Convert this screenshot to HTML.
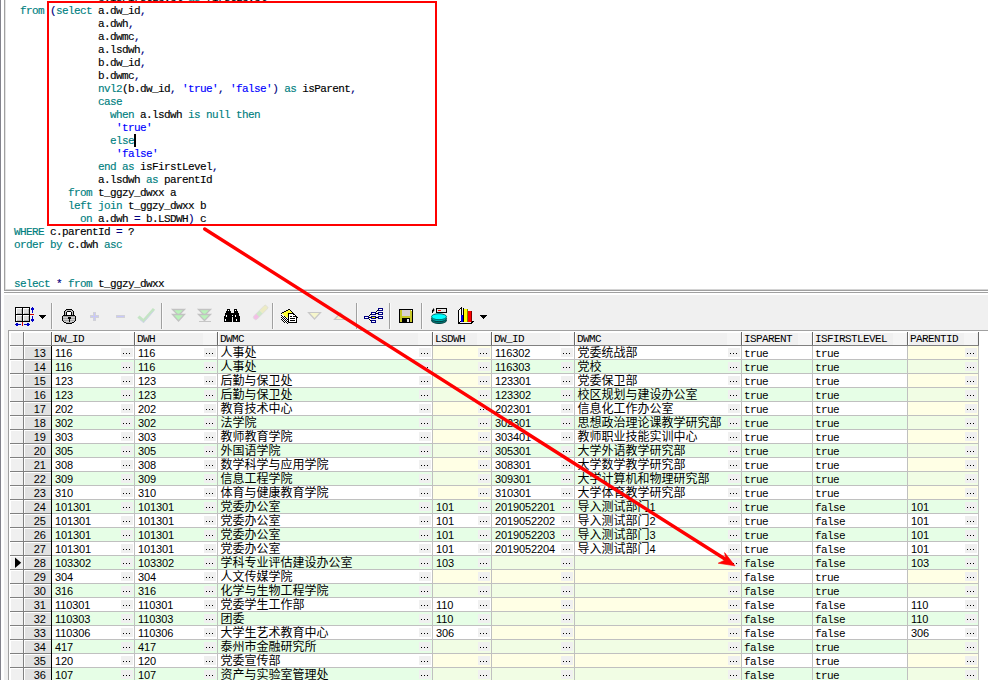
<!DOCTYPE html>
<html lang="zh-CN">
<head>
<meta charset="utf-8">
<title>SQL Window</title>
<style>
html,body{margin:0;padding:0;}
body{width:988px;height:680px;overflow:hidden;background:#fff;position:relative;font-family:"Liberation Mono","Noto Sans CJK SC",monospace;}
div,span,i,svg{position:absolute;box-sizing:border-box;}
span{position:static;}
/* window edges */
#edge{left:0;top:0;width:1px;height:680px;background:#82828c;}
#edl{left:4px;top:0;width:1px;height:290px;background:#a0a0a0;}
#edl2{left:5px;top:0;width:1px;height:289px;background:#e3e3e3;}
#edb1{left:5px;top:289px;width:983px;height:1px;background:#d4d4d4;}
#edb2{left:4px;top:290px;width:984px;height:1px;background:#a0a0a0;}
#spl{left:4px;top:292px;width:984px;height:1px;background:#a0a0a0;}
#tb{left:4px;top:295px;width:984px;height:385px;background:#f0f0f0;}
/* editor text */
.cl{-webkit-text-stroke:0.15px;white-space:pre;font-size:11px;line-height:13px;height:13px;letter-spacing:-0.6px;color:#000;}
.k{color:#008080;}
.s{color:#0000ff;}
.y{color:#000080;}
#caret{left:134px;top:134px;width:2px;height:13px;background:#000;}
#box{left:47px;top:1px;width:390px;height:225px;border:2px solid #ff0000;}
#arrow{left:0;top:0;}
/* grid */
#grid{left:8px;top:330px;width:980px;height:350px;background:#fff;border-left:1px solid #a0a0a0;border-top:1px solid #a0a0a0;}
#gridwrap{left:0;top:0;width:988px;height:680px;font-size:11px;letter-spacing:-0.6px;}
.hrow{left:0;top:332px;width:979px;height:14px;}
#hbg{left:10px;top:332px;width:969px;height:14px;background:#f0f0f0;border-bottom:1px solid #808080;}
.hc{top:0;height:13px;border-left:1px solid #fff;border-top:1px solid #fff;border-right:0;}
.hc::after{content:"";position:absolute;right:-1px;top:-1px;width:1px;height:13px;background:#696969;}
.ht{position:absolute;left:1px;top:0px;line-height:13px;white-space:pre;}
.hb{right:1px;top:0px;width:13px;height:12px;background:#f5f5f5;}
.row{left:0;width:979px;height:14px;}
.row>div{top:0;height:13px;line-height:13px;white-space:pre;}
.ic{left:10px;width:13px;background:#f0f0f0;border-left:1px solid #fff;border-top:1px solid #fff;}
.nc{left:24px;width:27px;background:#e1e1e1;border-left:1px solid #fff;border-top:1px solid #fff;text-align:right;padding-right:5.2px;}
.row>.nc{line-height:13px;}
.c{background:#fff;padding-left:2px;overflow:hidden;}
.row>.c{line-height:17px;}
.row>.c.d,.row>.c.zz{line-height:15px;}
.row>.c.d{padding-left:3px;}
.row>.c.zz{padding-left:2.5px;}
.alt .c{background:#e6fee6;}
.c.nul{background:#ffffe5;}
.alt .c.nul{background:#f1fde4;}
.z{font-family:"Liberation Sans","Noto Sans CJK SC",sans-serif;font-size:12px;letter-spacing:0;}
.d,.row>.nc,.row>.zz{font-family:"Liberation Sans",sans-serif;font-size:11px;letter-spacing:-0.12px;}
.b{right:1px;top:2px;width:12px;height:9px;background:#f0f0f0;}
.b::after{content:"";position:absolute;left:2px;top:5px;width:1px;height:1px;background:#000;box-shadow:3px 0 0 #000,6px 0 0 #000;}
.mk{left:4px;top:0px;}
.hl{left:10px;width:969px;height:1px;background:#c0c0c0;}
.hlf{left:10px;width:41px;height:1px;background:#808080;}
.vl{top:346px;width:1px;height:334px;background:#c0c0c0;}
#vnum{left:51px;top:346px;width:1px;height:334px;background:#000;}
#vind{left:23px;top:332px;width:1px;height:348px;background:#808080;}
</style>
</head>
<body>
<div id="edge"></div>
<div id="tb"></div>
<div id="edl"></div><div id="edl2"></div><div id="edb1"></div><div id="edb2"></div><div id="spl"></div>
<div id="editor">
<div class="cl" style="left:98px;top:-8px">c.isFirstLevel <span class="k">as</span> firstLevel</div>
<div class="cl" style="left:20px;top:5px"><span class="k">from</span> <span class="y">(</span><span class="k">select</span> a.dw_id<span class="y">,</span></div>
<div class="cl" style="left:98px;top:18px">a.dwh<span class="y">,</span></div>
<div class="cl" style="left:98px;top:31px">a.dwmc<span class="y">,</span></div>
<div class="cl" style="left:98px;top:44px">a.lsdwh<span class="y">,</span></div>
<div class="cl" style="left:98px;top:57px">b.dw_id<span class="y">,</span></div>
<div class="cl" style="left:98px;top:70px">b.dwmc<span class="y">,</span></div>
<div class="cl" style="left:98px;top:83px"><span class="k">nvl2</span>(b.dw_id<span class="y">,</span> <span class="s">'true'</span><span class="y">,</span> <span class="s">'false'</span><span class="y">)</span> <span class="k">as</span> isParent<span class="y">,</span></div>
<div class="cl" style="left:98px;top:96px"><span class="k">case</span></div>
<div class="cl" style="left:110px;top:109px"><span class="k">when</span> a.lsdwh <span class="k">is null then</span></div>
<div class="cl" style="left:116px;top:122px"><span class="s">'true'</span></div>
<div class="cl" style="left:110px;top:135px"><span class="k">else</span></div>
<div class="cl" style="left:116px;top:148px"><span class="s">'false'</span></div>
<div class="cl" style="left:98px;top:161px"><span class="k">end as</span> isFirstLevel<span class="y">,</span></div>
<div class="cl" style="left:98px;top:174px">a.lsdwh <span class="k">as</span> parentId</div>
<div class="cl" style="left:68px;top:187px"><span class="k">from</span> t_ggzy_dwxx a</div>
<div class="cl" style="left:68px;top:200px"><span class="k">left join</span> t_ggzy_dwxx b</div>
<div class="cl" style="left:80px;top:213px"><span class="k">on</span> a.dwh <span class="y">=</span> b.LSDWH<span class="y">)</span> c</div>
<div class="cl" style="left:14px;top:226px"><span class="k">WHERE</span> c.parentId <span class="y">=</span> ?</div>
<div class="cl" style="left:14px;top:239px"><span class="k">order by</span> c.dwh <span class="k">asc</span></div>
<div class="cl" style="left:14px;top:278px"><span class="k">select</span> <span class="y">*</span> <span class="k">from</span> t_ggzy_dwxx</div>
<div id="caret"></div>
</div>
<svg id="tbsvg" style="left:0;top:295px" width="988" height="36" viewBox="0 295 988 36">
<!-- separators -->
<g shape-rendering="crispEdges">
<path d="M51 303v26h1v-26zM161 303v26h1v-26zM272 303v26h1v-26zM356 303v26h1v-26zM389 303v26h1v-26zM421 303v26h1v-26z" fill="#a0a0a0"/>
<path d="M52 303v26h1v-26zM162 303v26h1v-26zM273 303v26h1v-26zM357 303v26h1v-26zM390 303v26h1v-26zM422 303v26h1v-26z" fill="#fafafa"/>
</g>
<!-- grid / single record icon -->
<g shape-rendering="crispEdges">
<rect x="15" y="307" width="15" height="15" fill="#000"/>
<rect x="16" y="308" width="6" height="6" fill="#fff"/><rect x="23" y="308" width="6" height="6" fill="#fff"/>
<rect x="16" y="315" width="6" height="6" fill="#fff"/><rect x="23" y="315" width="6" height="6" fill="#fff"/>
<rect x="17" y="309" width="5" height="5" fill="#b8b8b8"/><rect x="24" y="309" width="5" height="5" fill="#b8b8b8"/>
<rect x="17" y="316" width="5" height="5" fill="#b8b8b8"/><rect x="24" y="316" width="5" height="5" fill="#b8b8b8"/>
<rect x="17" y="309" width="4" height="4" fill="#dedede"/><rect x="24" y="309" width="4" height="4" fill="#dedede"/>
<rect x="17" y="316" width="4" height="4" fill="#dedede"/><rect x="24" y="316" width="4" height="4" fill="#dedede"/>
<!-- vertical arrows -->
<path d="M32 307h1v6h-1zM31 308h3v2h-3z" fill="#0000c8"/>
<path d="M32 316h1v6h-1zM31 319h3v2h-3z" fill="#0000c8"/>
<rect x="30" y="314" width="4" height="1" fill="#d00000"/>
<!-- horizontal arrows -->
<path d="M15 324h6v1h-6zM16 323h2v3h-2z" fill="#0000c8"/>
<path d="M24 324h6v1h-6zM27 323h2v3h-2z" fill="#0000c8"/>
<rect x="22" y="322" width="1" height="4" fill="#d00000"/>
<!-- dropdown -->
<path d="M39 315h7v1h-7zM40 316h5v1h-5zM41 317h3v1h-3zM42 318h1v1h-1z" fill="#000"/>
</g>
<!-- lock -->
<g shape-rendering="crispEdges">
<path d="M66 309h6v1h1v1h1v4h-10v-4h1v-1h1z" fill="#000"/>
<path d="M66 310h6v1h1v4h-8v-4h1z" fill="#bcbcbc"/>
<path d="M67 311h4v1h1v3h-6v-3h1z" fill="#000"/>
<rect x="67" y="312" width="4" height="3" fill="#fff"/>
<path d="M63 315h12v1h1v5h-1v1h-1v1h-2v1h-6v-1h-2v-1h-1v-1h-1v-5h1z" fill="#000"/>
<path d="M63 316h12v5h-1v1h-2v1h-6v-1h-2v-1h-1z" fill="#a6a6a6"/>
<path d="M63 317h12v1h-12zM63 319h12v1h-12zM64 321h10v1h-10z" fill="#d0d0d0"/>
<path d="M68 317h3v2h-1v3h-1v-3h-1z" fill="#000"/>
</g>
<!-- plus, minus (disabled) -->
<g shape-rendering="crispEdges">
<path d="M93 312h3v3h3v3h-3v3h-3v-3h-3v-3h3z" fill="#d2d2d8"/>
<path d="M94 313h1v3h3v1h-3v3h-1v-3h-3v-1h3z" fill="#c8c8fa"/>
<rect x="116" y="315" width="9" height="3" fill="#d2d2d8"/><rect x="117" y="316" width="7" height="1" fill="#c8c8fa"/>
</g>
<!-- check (disabled) -->
<path d="M139.5 317.5l4 3.5l9.5-11" fill="none" stroke="#c4e4c4" stroke-width="3" stroke-linecap="square"/>
<path d="M140 319.6l3.6 3l9.8-11.2" fill="none" stroke="#d0d0ee" stroke-width="0.9"/>
<!-- double arrows (disabled) -->
<g stroke="#c2c2c2" stroke-width="1.3" fill="#b9f3b9" stroke-linejoin="miter">
<path d="M172.5 309.5h12l-6 6z"/><path d="M172.5 314.5h12l-6 6.5z"/>
<path d="M198.5 309.5h12l-6 6z"/><path d="M198.5 314.5h12l-6 6z"/>
</g>
<rect x="199" y="321" width="12" height="1" fill="#c6c6c6" shape-rendering="crispEdges"/>
<!-- binoculars -->
<g fill="#000" shape-rendering="crispEdges">
<path d="M227 309h3v2h1v2h1v9h-8v-6h1v-3h1v-2h1z"/>
<path d="M234 309h3v2h1v2h1v3h1v6h-7v-9h1z"/>
<rect x="231" y="313" width="3" height="4"/>
</g>
<g fill="#fff" shape-rendering="crispEdges">
<rect x="228" y="310" width="1" height="1"/><rect x="235" y="310" width="1" height="1"/>
<rect x="226" y="315" width="1" height="2"/><rect x="235" y="315" width="1" height="2"/>
<rect x="225" y="319" width="1" height="2"/><rect x="236" y="319" width="1" height="2"/>
<rect x="232" y="315" width="1" height="1"/>
</g>
<!-- eraser (disabled) -->
<g transform="rotate(-45 260.5 312.5)">
<rect x="251.5" y="310.2" width="7" height="4.6" rx="2.2" fill="#f3bfe6"/>
<rect x="256.5" y="310.2" width="5" height="4.6" fill="#cfe9c8"/>
<rect x="261.5" y="310.2" width="8" height="4.6" fill="#ecebc4"/>
<rect x="251.5" y="310.2" width="18" height="4.6" rx="2" fill="none" stroke="#dcdcdc" stroke-width="0.7"/>
</g>
<!-- query by example -->
<g shape-rendering="crispEdges">
<path d="M282 313.500L289 309.800L293.500 313.500L288 317.500L286.500 317.500Z" fill="#ffff30" shape-rendering="auto"/>
<rect x="288" y="309" width="2" height="1" fill="#000"/><rect x="286" y="310" width="2" height="1" fill="#000"/><rect x="284" y="311" width="2" height="1" fill="#000"/><rect x="282" y="312" width="2" height="1" fill="#000"/><rect x="281" y="313" width="1" height="1" fill="#000"/><rect x="290" y="310" width="1" height="1" fill="#000"/><rect x="291" y="311" width="1" height="1" fill="#000"/><rect x="292" y="312" width="1" height="1" fill="#000"/><rect x="293" y="313" width="1" height="1" fill="#000"/><rect x="294" y="314" width="1" height="1" fill="#000"/><rect x="295" y="315" width="1" height="1" fill="#000"/><rect x="296" y="316" width="1" height="1" fill="#000"/><rect x="297" y="317" width="1" height="1" fill="#000"/><rect x="281" y="314" width="1" height="1" fill="#fff"/><rect x="281" y="315" width="1" height="1" fill="#000"/><rect x="282" y="315" width="1" height="1" fill="#fff"/><rect x="281" y="316" width="1" height="1" fill="#fff"/><rect x="282" y="316" width="1" height="1" fill="#000"/><rect x="283" y="316" width="1" height="1" fill="#fff"/><rect x="284" y="316" width="1" height="1" fill="#000"/><rect x="281" y="317" width="1" height="1" fill="#000"/><rect x="282" y="317" width="1" height="1" fill="#fff"/><rect x="283" y="317" width="1" height="1" fill="#000"/><rect x="284" y="317" width="1" height="1" fill="#fff"/><rect x="285" y="317" width="1" height="1" fill="#000"/><rect x="281" y="318" width="1" height="1" fill="#fff"/><rect x="282" y="318" width="1" height="1" fill="#000"/><rect x="283" y="318" width="1" height="1" fill="#fff"/><rect x="284" y="318" width="1" height="1" fill="#000"/><rect x="285" y="318" width="1" height="1" fill="#fff"/><rect x="286" y="318" width="1" height="1" fill="#000"/><rect x="281" y="319" width="1" height="1" fill="#000"/><rect x="282" y="319" width="1" height="1" fill="#fff"/><rect x="283" y="319" width="1" height="1" fill="#000"/><rect x="284" y="319" width="1" height="1" fill="#fff"/><rect x="285" y="319" width="1" height="1" fill="#000"/><rect x="286" y="319" width="1" height="1" fill="#fff"/><rect x="287" y="319" width="1" height="1" fill="#000"/><rect x="282" y="320" width="1" height="1" fill="#000"/><rect x="283" y="320" width="1" height="1" fill="#fff"/><rect x="284" y="320" width="1" height="1" fill="#000"/><rect x="285" y="320" width="1" height="1" fill="#fff"/><rect x="286" y="320" width="1" height="1" fill="#000"/><rect x="287" y="320" width="1" height="1" fill="#fff"/><rect x="283" y="321" width="1" height="1" fill="#000"/><rect x="284" y="321" width="1" height="1" fill="#fff"/><rect x="285" y="321" width="1" height="1" fill="#000"/><rect x="286" y="321" width="1" height="1" fill="#fff"/><rect x="287" y="321" width="1" height="1" fill="#000"/><rect x="284" y="322" width="1" height="1" fill="#000"/><rect x="285" y="322" width="1" height="1" fill="#fff"/><rect x="286" y="322" width="1" height="1" fill="#000"/><rect x="287" y="322" width="1" height="1" fill="#fff"/><rect x="286" y="323" width="1" height="1" fill="#fff"/><rect x="287" y="323" width="1" height="1" fill="#000"/><rect x="287" y="324" width="1" height="1" fill="#fff"/><rect x="288" y="313" width="6" height="1" fill="#000"/><rect x="288" y="313" width="1" height="10" fill="#000"/><rect x="288" y="322" width="9" height="1" fill="#000"/><rect x="296" y="317" width="1" height="6" fill="#000"/><rect x="289" y="314" width="4" height="8" fill="#fff"/><rect x="293" y="315" width="1" height="7" fill="#fff"/><rect x="294" y="316" width="1" height="6" fill="#fff"/><rect x="295" y="317" width="1" height="5" fill="#fff"/><rect x="293" y="314" width="1" height="1" fill="#000"/><rect x="294" y="315" width="1" height="1" fill="#000"/><rect x="295" y="316" width="1" height="1" fill="#000"/><rect x="296" y="317" width="1" height="1" fill="#000"/><rect x="293" y="316" width="2" height="1" fill="#000"/><rect x="294" y="315" width="1" height="1" fill="#fff"/><rect x="290" y="316" width="2" height="1" fill="#000"/><rect x="290" y="318" width="5" height="1" fill="#000"/><rect x="290" y="320" width="5" height="1" fill="#000"/>
</g>
<!-- down / up triangles (disabled) -->
<g stroke="#c8c8c8" stroke-width="1.2" fill="#f6f6cc">
<path d="M308.5 312.5h12l-6 6.5z"/>
<path d="M334.5 319.5h12l-6 -6.5z"/>
</g>
<!-- tree icon -->
<g shape-rendering="crispEdges">
<rect x="364" y="316" width="5" height="3" fill="#000080"/><rect x="365" y="317" width="3" height="1" fill="#fff"/><rect x="371" y="312" width="5" height="3" fill="#000080"/><rect x="372" y="313" width="3" height="1" fill="#fff"/><rect x="371" y="316" width="5" height="3" fill="#000080"/><rect x="372" y="317" width="3" height="1" fill="#ffff00"/><rect x="371" y="320" width="5" height="3" fill="#000080"/><rect x="372" y="321" width="3" height="1" fill="#fff"/><rect x="378" y="308" width="5" height="3" fill="#000080"/><rect x="379" y="309" width="3" height="1" fill="#fff"/><rect x="378" y="312" width="5" height="3" fill="#000080"/><rect x="379" y="313" width="3" height="1" fill="#fff"/><rect x="378" y="316" width="5" height="3" fill="#000080"/><rect x="379" y="317" width="3" height="1" fill="#fff"/>
<path d="M369 317h2v1h-2zM376 317h2v1h-2zM376 313h2v1h-2zM369 315h1v1h-1zM370 314h1v1h-1zM369 319h1v1h-1zM370 320h1v1h-1zM376 311h1v1h-1zM377 310h1v1h-1z" fill="#000"/>
</g>
<!-- floppy -->
<g shape-rendering="crispEdges">
<rect x="399" y="309" width="14" height="14" fill="#000"/>
<rect x="400" y="310" width="12" height="12" fill="#c8c828"/>
<rect x="402" y="310" width="8" height="6" fill="#d8d0d0"/>
<rect x="402" y="318" width="8" height="4" fill="#000"/>
<rect x="407" y="319" width="2" height="3" fill="#e8e8e8"/>
<rect x="411" y="310" width="1" height="1" fill="#fff"/>
</g>
<!-- db connect icon -->
<g>
<ellipse cx="439" cy="320.5" rx="7.5" ry="3" fill="#008080" stroke="#003c3c" stroke-width="1"/>
<ellipse cx="439" cy="318.7" rx="7.5" ry="3" fill="#00a8a8" stroke="#003c3c" stroke-width="1"/>
<ellipse cx="439" cy="316.7" rx="7.5" ry="3" fill="#00ffff" stroke="#006c6c" stroke-width="1"/>
<rect x="436.5" y="308.500" width="10" height="4" fill="#e6e6e6" stroke="#000" stroke-width="1"/>
<rect x="438" y="310" width="3" height="1" fill="#ff0000"/>
<path d="M432.5 313v-3h2M433.500 308.500v3" fill="none" stroke="#000" stroke-width="1"/>
</g>
<!-- chart icon -->
<g shape-rendering="crispEdges">
<path d="M458 311l3-3v13l-3 3z" fill="#fff" stroke="#000" stroke-width="1"/>
<path d="M458 323.5h13l3-2.5" fill="none" stroke="#000" stroke-width="1.2"/>
<rect x="461" y="315" width="3" height="7" fill="#0000e0"/>
<rect x="464" y="309" width="4" height="13" fill="#ffff00"/><rect x="467" y="309" width="1" height="13" fill="#808000"/>
<rect x="468" y="311" width="4" height="11" fill="#ff0000"/><rect x="471" y="311" width="1" height="11" fill="#800000"/>
<rect x="463" y="308" width="1" height="14" fill="#000"/>
<path d="M480 315h7v1h-7zM481 316h5v1h-5zM482 317h3v1h-3zM483 318h1v1h-1z" fill="#000"/>
</g>
</svg>

<div id="grid"></div>
<div id="gridwrap">
<div id="hbg"></div><div class="hrow">
<div class="hc" style="left:10px;width:13px"></div>
<div class="hc" style="left:24px;width:27px"></div>
<div class="hc" style="left:52px;width:82px"><span class="ht">DW_ID</span><i class="hb"></i></div>
<div class="hc" style="left:135px;width:82px"><span class="ht">DWH</span><i class="hb"></i></div>
<div class="hc" style="left:218px;width:214px"><span class="ht">DWMC</span><i class="hb"></i></div>
<div class="hc" style="left:433px;width:58px"><span class="ht">LSDWH</span><i class="hb"></i></div>
<div class="hc" style="left:492px;width:82px"><span class="ht">DW_ID</span><i class="hb"></i></div>
<div class="hc" style="left:575px;width:166px"><span class="ht">DWMC</span><i class="hb"></i></div>
<div class="hc" style="left:742px;width:70px"><span class="ht">ISPARENT</span><i class="hb"></i></div>
<div class="hc" style="left:813px;width:94px"><span class="ht">ISFIRSTLEVEL</span><i class="hb"></i></div>
<div class="hc" style="left:908px;width:70px"><span class="ht">PARENTID</span><i class="hb"></i></div>
</div>
<div class="row" style="top:346px">
<div class="ic"></div><div class="nc">13</div>
<div class="c d" style="left:52px;width:82px">116<i class="b"></i></div>
<div class="c d" style="left:135px;width:82px">116<i class="b"></i></div>
<div class="c zz" style="left:218px;width:214px"><span class="z">人事处</span><i class="b"></i></div>
<div class="c nul" style="left:433px;width:58px"><i class="b"></i></div>
<div class="c d" style="left:492px;width:82px">116302<i class="b"></i></div>
<div class="c zz" style="left:575px;width:166px"><span class="z">党委统战部</span><i class="b"></i></div>
<div class="c" style="left:742px;width:70px">true</div>
<div class="c" style="left:813px;width:94px">true</div>
<div class="c nul" style="left:908px;width:70px"><i class="b"></i></div>
</div>
<div class="row alt" style="top:360px">
<div class="ic"></div><div class="nc">14</div>
<div class="c d" style="left:52px;width:82px">116<i class="b"></i></div>
<div class="c d" style="left:135px;width:82px">116<i class="b"></i></div>
<div class="c zz" style="left:218px;width:214px"><span class="z">人事处</span><i class="b"></i></div>
<div class="c nul" style="left:433px;width:58px"><i class="b"></i></div>
<div class="c d" style="left:492px;width:82px">116303<i class="b"></i></div>
<div class="c zz" style="left:575px;width:166px"><span class="z">党校</span><i class="b"></i></div>
<div class="c" style="left:742px;width:70px">true</div>
<div class="c" style="left:813px;width:94px">true</div>
<div class="c nul" style="left:908px;width:70px"><i class="b"></i></div>
</div>
<div class="row" style="top:374px">
<div class="ic"></div><div class="nc">15</div>
<div class="c d" style="left:52px;width:82px">123<i class="b"></i></div>
<div class="c d" style="left:135px;width:82px">123<i class="b"></i></div>
<div class="c zz" style="left:218px;width:214px"><span class="z">后勤与保卫处</span><i class="b"></i></div>
<div class="c nul" style="left:433px;width:58px"><i class="b"></i></div>
<div class="c d" style="left:492px;width:82px">123301<i class="b"></i></div>
<div class="c zz" style="left:575px;width:166px"><span class="z">党委保卫部</span><i class="b"></i></div>
<div class="c" style="left:742px;width:70px">true</div>
<div class="c" style="left:813px;width:94px">true</div>
<div class="c nul" style="left:908px;width:70px"><i class="b"></i></div>
</div>
<div class="row alt" style="top:388px">
<div class="ic"></div><div class="nc">16</div>
<div class="c d" style="left:52px;width:82px">123<i class="b"></i></div>
<div class="c d" style="left:135px;width:82px">123<i class="b"></i></div>
<div class="c zz" style="left:218px;width:214px"><span class="z">后勤与保卫处</span><i class="b"></i></div>
<div class="c nul" style="left:433px;width:58px"><i class="b"></i></div>
<div class="c d" style="left:492px;width:82px">123302<i class="b"></i></div>
<div class="c zz" style="left:575px;width:166px"><span class="z">校区规划与建设办公室</span><i class="b"></i></div>
<div class="c" style="left:742px;width:70px">true</div>
<div class="c" style="left:813px;width:94px">true</div>
<div class="c nul" style="left:908px;width:70px"><i class="b"></i></div>
</div>
<div class="row" style="top:402px">
<div class="ic"></div><div class="nc">17</div>
<div class="c d" style="left:52px;width:82px">202<i class="b"></i></div>
<div class="c d" style="left:135px;width:82px">202<i class="b"></i></div>
<div class="c zz" style="left:218px;width:214px"><span class="z">教育技术中心</span><i class="b"></i></div>
<div class="c nul" style="left:433px;width:58px"><i class="b"></i></div>
<div class="c d" style="left:492px;width:82px">202301<i class="b"></i></div>
<div class="c zz" style="left:575px;width:166px"><span class="z">信息化工作办公室</span><i class="b"></i></div>
<div class="c" style="left:742px;width:70px">true</div>
<div class="c" style="left:813px;width:94px">true</div>
<div class="c nul" style="left:908px;width:70px"><i class="b"></i></div>
</div>
<div class="row alt" style="top:416px">
<div class="ic"></div><div class="nc">18</div>
<div class="c d" style="left:52px;width:82px">302<i class="b"></i></div>
<div class="c d" style="left:135px;width:82px">302<i class="b"></i></div>
<div class="c zz" style="left:218px;width:214px"><span class="z">法学院</span><i class="b"></i></div>
<div class="c nul" style="left:433px;width:58px"><i class="b"></i></div>
<div class="c d" style="left:492px;width:82px">302301<i class="b"></i></div>
<div class="c zz" style="left:575px;width:166px"><span class="z">思想政治理论课教学研究部</span><i class="b"></i></div>
<div class="c" style="left:742px;width:70px">true</div>
<div class="c" style="left:813px;width:94px">true</div>
<div class="c nul" style="left:908px;width:70px"><i class="b"></i></div>
</div>
<div class="row" style="top:430px">
<div class="ic"></div><div class="nc">19</div>
<div class="c d" style="left:52px;width:82px">303<i class="b"></i></div>
<div class="c d" style="left:135px;width:82px">303<i class="b"></i></div>
<div class="c zz" style="left:218px;width:214px"><span class="z">教师教育学院</span><i class="b"></i></div>
<div class="c nul" style="left:433px;width:58px"><i class="b"></i></div>
<div class="c d" style="left:492px;width:82px">303401<i class="b"></i></div>
<div class="c zz" style="left:575px;width:166px"><span class="z">教师职业技能实训中心</span><i class="b"></i></div>
<div class="c" style="left:742px;width:70px">true</div>
<div class="c" style="left:813px;width:94px">true</div>
<div class="c nul" style="left:908px;width:70px"><i class="b"></i></div>
</div>
<div class="row alt" style="top:444px">
<div class="ic"></div><div class="nc">20</div>
<div class="c d" style="left:52px;width:82px">305<i class="b"></i></div>
<div class="c d" style="left:135px;width:82px">305<i class="b"></i></div>
<div class="c zz" style="left:218px;width:214px"><span class="z">外国语学院</span><i class="b"></i></div>
<div class="c nul" style="left:433px;width:58px"><i class="b"></i></div>
<div class="c d" style="left:492px;width:82px">305301<i class="b"></i></div>
<div class="c zz" style="left:575px;width:166px"><span class="z">大学外语教学研究部</span><i class="b"></i></div>
<div class="c" style="left:742px;width:70px">true</div>
<div class="c" style="left:813px;width:94px">true</div>
<div class="c nul" style="left:908px;width:70px"><i class="b"></i></div>
</div>
<div class="row" style="top:458px">
<div class="ic"></div><div class="nc">21</div>
<div class="c d" style="left:52px;width:82px">308<i class="b"></i></div>
<div class="c d" style="left:135px;width:82px">308<i class="b"></i></div>
<div class="c zz" style="left:218px;width:214px"><span class="z">数学科学与应用学院</span><i class="b"></i></div>
<div class="c nul" style="left:433px;width:58px"><i class="b"></i></div>
<div class="c d" style="left:492px;width:82px">308301<i class="b"></i></div>
<div class="c zz" style="left:575px;width:166px"><span class="z">大学数学教学研究部</span><i class="b"></i></div>
<div class="c" style="left:742px;width:70px">true</div>
<div class="c" style="left:813px;width:94px">true</div>
<div class="c nul" style="left:908px;width:70px"><i class="b"></i></div>
</div>
<div class="row alt" style="top:472px">
<div class="ic"></div><div class="nc">22</div>
<div class="c d" style="left:52px;width:82px">309<i class="b"></i></div>
<div class="c d" style="left:135px;width:82px">309<i class="b"></i></div>
<div class="c zz" style="left:218px;width:214px"><span class="z">信息工程学院</span><i class="b"></i></div>
<div class="c nul" style="left:433px;width:58px"><i class="b"></i></div>
<div class="c d" style="left:492px;width:82px">309301<i class="b"></i></div>
<div class="c zz" style="left:575px;width:166px"><span class="z">大学计算机和物理研究部</span><i class="b"></i></div>
<div class="c" style="left:742px;width:70px">true</div>
<div class="c" style="left:813px;width:94px">true</div>
<div class="c nul" style="left:908px;width:70px"><i class="b"></i></div>
</div>
<div class="row" style="top:486px">
<div class="ic"></div><div class="nc">23</div>
<div class="c d" style="left:52px;width:82px">310<i class="b"></i></div>
<div class="c d" style="left:135px;width:82px">310<i class="b"></i></div>
<div class="c zz" style="left:218px;width:214px"><span class="z">体育与健康教育学院</span><i class="b"></i></div>
<div class="c nul" style="left:433px;width:58px"><i class="b"></i></div>
<div class="c d" style="left:492px;width:82px">310301<i class="b"></i></div>
<div class="c zz" style="left:575px;width:166px"><span class="z">大学体育教学研究部</span><i class="b"></i></div>
<div class="c" style="left:742px;width:70px">true</div>
<div class="c" style="left:813px;width:94px">true</div>
<div class="c nul" style="left:908px;width:70px"><i class="b"></i></div>
</div>
<div class="row alt" style="top:500px">
<div class="ic"></div><div class="nc">24</div>
<div class="c d" style="left:52px;width:82px">101301<i class="b"></i></div>
<div class="c d" style="left:135px;width:82px">101301<i class="b"></i></div>
<div class="c zz" style="left:218px;width:214px"><span class="z">党委办公室</span><i class="b"></i></div>
<div class="c d" style="left:433px;width:58px">101<i class="b"></i></div>
<div class="c d" style="left:492px;width:82px">2019052201<i class="b"></i></div>
<div class="c zz" style="left:575px;width:166px"><span class="z">导入测试部门</span>1<i class="b"></i></div>
<div class="c" style="left:742px;width:70px">true</div>
<div class="c" style="left:813px;width:94px">false</div>
<div class="c d" style="left:908px;width:70px">101<i class="b"></i></div>
</div>
<div class="row" style="top:514px">
<div class="ic"></div><div class="nc">25</div>
<div class="c d" style="left:52px;width:82px">101301<i class="b"></i></div>
<div class="c d" style="left:135px;width:82px">101301<i class="b"></i></div>
<div class="c zz" style="left:218px;width:214px"><span class="z">党委办公室</span><i class="b"></i></div>
<div class="c d" style="left:433px;width:58px">101<i class="b"></i></div>
<div class="c d" style="left:492px;width:82px">2019052202<i class="b"></i></div>
<div class="c zz" style="left:575px;width:166px"><span class="z">导入测试部门</span>2<i class="b"></i></div>
<div class="c" style="left:742px;width:70px">true</div>
<div class="c" style="left:813px;width:94px">false</div>
<div class="c d" style="left:908px;width:70px">101<i class="b"></i></div>
</div>
<div class="row alt" style="top:528px">
<div class="ic"></div><div class="nc">26</div>
<div class="c d" style="left:52px;width:82px">101301<i class="b"></i></div>
<div class="c d" style="left:135px;width:82px">101301<i class="b"></i></div>
<div class="c zz" style="left:218px;width:214px"><span class="z">党委办公室</span><i class="b"></i></div>
<div class="c d" style="left:433px;width:58px">101<i class="b"></i></div>
<div class="c d" style="left:492px;width:82px">2019052203<i class="b"></i></div>
<div class="c zz" style="left:575px;width:166px"><span class="z">导入测试部门</span>3<i class="b"></i></div>
<div class="c" style="left:742px;width:70px">true</div>
<div class="c" style="left:813px;width:94px">false</div>
<div class="c d" style="left:908px;width:70px">101<i class="b"></i></div>
</div>
<div class="row" style="top:542px">
<div class="ic"></div><div class="nc">27</div>
<div class="c d" style="left:52px;width:82px">101301<i class="b"></i></div>
<div class="c d" style="left:135px;width:82px">101301<i class="b"></i></div>
<div class="c zz" style="left:218px;width:214px"><span class="z">党委办公室</span><i class="b"></i></div>
<div class="c d" style="left:433px;width:58px">101<i class="b"></i></div>
<div class="c d" style="left:492px;width:82px">2019052204<i class="b"></i></div>
<div class="c zz" style="left:575px;width:166px"><span class="z">导入测试部门</span>4<i class="b"></i></div>
<div class="c" style="left:742px;width:70px">true</div>
<div class="c" style="left:813px;width:94px">false</div>
<div class="c d" style="left:908px;width:70px">101<i class="b"></i></div>
</div>
<div class="row alt" style="top:556px">
<div class="ic"><svg class="mk" width="8" height="12" viewBox="0 0 8 12"><path d="M0 0.5 L6.2 5.75 L0 11 Z" fill="#000"/></svg></div><div class="nc">28</div>
<div class="c d" style="left:52px;width:82px">103302<i class="b"></i></div>
<div class="c d" style="left:135px;width:82px">103302<i class="b"></i></div>
<div class="c zz" style="left:218px;width:214px"><span class="z">学科专业评估建设办公室</span><i class="b"></i></div>
<div class="c d" style="left:433px;width:58px">103<i class="b"></i></div>
<div class="c nul" style="left:492px;width:82px"><i class="b"></i></div>
<div class="c nul" style="left:575px;width:166px"><i class="b"></i></div>
<div class="c" style="left:742px;width:70px">false</div>
<div class="c" style="left:813px;width:94px">false</div>
<div class="c d" style="left:908px;width:70px">103<i class="b"></i></div>
</div>
<div class="row" style="top:570px">
<div class="ic"></div><div class="nc">29</div>
<div class="c d" style="left:52px;width:82px">304<i class="b"></i></div>
<div class="c d" style="left:135px;width:82px">304<i class="b"></i></div>
<div class="c zz" style="left:218px;width:214px"><span class="z">人文传媒学院</span><i class="b"></i></div>
<div class="c nul" style="left:433px;width:58px"><i class="b"></i></div>
<div class="c nul" style="left:492px;width:82px"><i class="b"></i></div>
<div class="c nul" style="left:575px;width:166px"><i class="b"></i></div>
<div class="c" style="left:742px;width:70px">false</div>
<div class="c" style="left:813px;width:94px">true</div>
<div class="c nul" style="left:908px;width:70px"><i class="b"></i></div>
</div>
<div class="row alt" style="top:584px">
<div class="ic"></div><div class="nc">30</div>
<div class="c d" style="left:52px;width:82px">316<i class="b"></i></div>
<div class="c d" style="left:135px;width:82px">316<i class="b"></i></div>
<div class="c zz" style="left:218px;width:214px"><span class="z">化学与生物工程学院</span><i class="b"></i></div>
<div class="c nul" style="left:433px;width:58px"><i class="b"></i></div>
<div class="c nul" style="left:492px;width:82px"><i class="b"></i></div>
<div class="c nul" style="left:575px;width:166px"><i class="b"></i></div>
<div class="c" style="left:742px;width:70px">false</div>
<div class="c" style="left:813px;width:94px">true</div>
<div class="c nul" style="left:908px;width:70px"><i class="b"></i></div>
</div>
<div class="row" style="top:598px">
<div class="ic"></div><div class="nc">31</div>
<div class="c d" style="left:52px;width:82px">110301<i class="b"></i></div>
<div class="c d" style="left:135px;width:82px">110301<i class="b"></i></div>
<div class="c zz" style="left:218px;width:214px"><span class="z">党委学生工作部</span><i class="b"></i></div>
<div class="c d" style="left:433px;width:58px">110<i class="b"></i></div>
<div class="c nul" style="left:492px;width:82px"><i class="b"></i></div>
<div class="c nul" style="left:575px;width:166px"><i class="b"></i></div>
<div class="c" style="left:742px;width:70px">false</div>
<div class="c" style="left:813px;width:94px">false</div>
<div class="c d" style="left:908px;width:70px">110<i class="b"></i></div>
</div>
<div class="row alt" style="top:612px">
<div class="ic"></div><div class="nc">32</div>
<div class="c d" style="left:52px;width:82px">110303<i class="b"></i></div>
<div class="c d" style="left:135px;width:82px">110303<i class="b"></i></div>
<div class="c zz" style="left:218px;width:214px"><span class="z">团委</span><i class="b"></i></div>
<div class="c d" style="left:433px;width:58px">110<i class="b"></i></div>
<div class="c nul" style="left:492px;width:82px"><i class="b"></i></div>
<div class="c nul" style="left:575px;width:166px"><i class="b"></i></div>
<div class="c" style="left:742px;width:70px">false</div>
<div class="c" style="left:813px;width:94px">false</div>
<div class="c d" style="left:908px;width:70px">110<i class="b"></i></div>
</div>
<div class="row" style="top:626px">
<div class="ic"></div><div class="nc">33</div>
<div class="c d" style="left:52px;width:82px">110306<i class="b"></i></div>
<div class="c d" style="left:135px;width:82px">110306<i class="b"></i></div>
<div class="c zz" style="left:218px;width:214px"><span class="z">大学生艺术教育中心</span><i class="b"></i></div>
<div class="c d" style="left:433px;width:58px">306<i class="b"></i></div>
<div class="c nul" style="left:492px;width:82px"><i class="b"></i></div>
<div class="c nul" style="left:575px;width:166px"><i class="b"></i></div>
<div class="c" style="left:742px;width:70px">false</div>
<div class="c" style="left:813px;width:94px">false</div>
<div class="c d" style="left:908px;width:70px">306<i class="b"></i></div>
</div>
<div class="row alt" style="top:640px">
<div class="ic"></div><div class="nc">34</div>
<div class="c d" style="left:52px;width:82px">417<i class="b"></i></div>
<div class="c d" style="left:135px;width:82px">417<i class="b"></i></div>
<div class="c zz" style="left:218px;width:214px"><span class="z">泰州市金融研究所</span><i class="b"></i></div>
<div class="c nul" style="left:433px;width:58px"><i class="b"></i></div>
<div class="c nul" style="left:492px;width:82px"><i class="b"></i></div>
<div class="c nul" style="left:575px;width:166px"><i class="b"></i></div>
<div class="c" style="left:742px;width:70px">false</div>
<div class="c" style="left:813px;width:94px">true</div>
<div class="c nul" style="left:908px;width:70px"><i class="b"></i></div>
</div>
<div class="row" style="top:654px">
<div class="ic"></div><div class="nc">35</div>
<div class="c d" style="left:52px;width:82px">120<i class="b"></i></div>
<div class="c d" style="left:135px;width:82px">120<i class="b"></i></div>
<div class="c zz" style="left:218px;width:214px"><span class="z">党委宣传部</span><i class="b"></i></div>
<div class="c nul" style="left:433px;width:58px"><i class="b"></i></div>
<div class="c nul" style="left:492px;width:82px"><i class="b"></i></div>
<div class="c nul" style="left:575px;width:166px"><i class="b"></i></div>
<div class="c" style="left:742px;width:70px">false</div>
<div class="c" style="left:813px;width:94px">true</div>
<div class="c nul" style="left:908px;width:70px"><i class="b"></i></div>
</div>
<div class="row alt" style="top:668px">
<div class="ic"></div><div class="nc">36</div>
<div class="c d" style="left:52px;width:82px">107<i class="b"></i></div>
<div class="c d" style="left:135px;width:82px">107<i class="b"></i></div>
<div class="c zz" style="left:218px;width:214px"><span class="z">资产与实验室管理处</span><i class="b"></i></div>
<div class="c nul" style="left:433px;width:58px"><i class="b"></i></div>
<div class="c nul" style="left:492px;width:82px"><i class="b"></i></div>
<div class="c nul" style="left:575px;width:166px"><i class="b"></i></div>
<div class="c" style="left:742px;width:70px">false</div>
<div class="c" style="left:813px;width:94px">true</div>
<div class="c nul" style="left:908px;width:70px"><i class="b"></i></div>
</div>
<div class="hl" style="top:359px"></div><div class="hlf" style="top:359px"></div>
<div class="hl" style="top:373px"></div><div class="hlf" style="top:373px"></div>
<div class="hl" style="top:387px"></div><div class="hlf" style="top:387px"></div>
<div class="hl" style="top:401px"></div><div class="hlf" style="top:401px"></div>
<div class="hl" style="top:415px"></div><div class="hlf" style="top:415px"></div>
<div class="hl" style="top:429px"></div><div class="hlf" style="top:429px"></div>
<div class="hl" style="top:443px"></div><div class="hlf" style="top:443px"></div>
<div class="hl" style="top:457px"></div><div class="hlf" style="top:457px"></div>
<div class="hl" style="top:471px"></div><div class="hlf" style="top:471px"></div>
<div class="hl" style="top:485px"></div><div class="hlf" style="top:485px"></div>
<div class="hl" style="top:499px"></div><div class="hlf" style="top:499px"></div>
<div class="hl" style="top:513px"></div><div class="hlf" style="top:513px"></div>
<div class="hl" style="top:527px"></div><div class="hlf" style="top:527px"></div>
<div class="hl" style="top:541px"></div><div class="hlf" style="top:541px"></div>
<div class="hl" style="top:555px"></div><div class="hlf" style="top:555px"></div>
<div class="hl" style="top:569px"></div><div class="hlf" style="top:569px"></div>
<div class="hl" style="top:583px"></div><div class="hlf" style="top:583px"></div>
<div class="hl" style="top:597px"></div><div class="hlf" style="top:597px"></div>
<div class="hl" style="top:611px"></div><div class="hlf" style="top:611px"></div>
<div class="hl" style="top:625px"></div><div class="hlf" style="top:625px"></div>
<div class="hl" style="top:639px"></div><div class="hlf" style="top:639px"></div>
<div class="hl" style="top:653px"></div><div class="hlf" style="top:653px"></div>
<div class="hl" style="top:667px"></div><div class="hlf" style="top:667px"></div>
<div class="hl" style="top:681px"></div><div class="hlf" style="top:681px"></div>
<div class="vl" style="left:134px"></div>
<div class="vl" style="left:217px"></div>
<div class="vl" style="left:432px"></div>
<div class="vl" style="left:491px"></div>
<div class="vl" style="left:574px"></div>
<div class="vl" style="left:741px"></div>
<div class="vl" style="left:812px"></div>
<div class="vl" style="left:907px"></div>
<div class="vl" style="left:978px"></div>
<div id="vind"></div><div id="vnum"></div>
</div>
<div id="box"></div>
<svg id="arrow" width="988" height="680" viewBox="0 0 988 680">
<line x1="204.7" y1="229" x2="727" y2="560.3" stroke="#ff0000" stroke-width="3.4" stroke-linecap="round"/>
<path d="M735 565.8 L724.6 552.6 L726 559.6 L718.2 563.2 Z" fill="#ff0000" stroke="#ff0000" stroke-width="0.6" stroke-linejoin="round"/>
</svg>
</body>
</html>
